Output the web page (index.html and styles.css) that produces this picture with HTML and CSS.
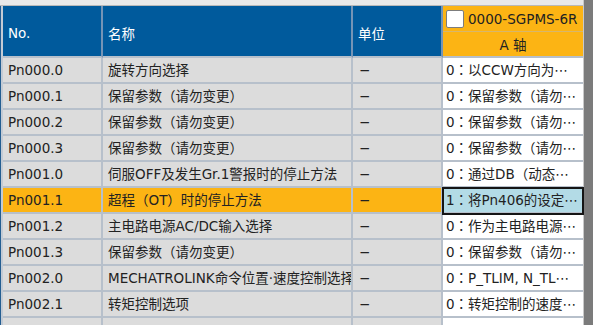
FILE: index.html
```html
<!DOCTYPE html>
<html lang="zh-CN">
<head>
<meta charset="utf-8">
<title>参数一览</title>
<link rel="stylesheet" href="styles.css">
</head>
<body>
<div class="top-strip"></div>
<div class="main">
  <div class="grid">
    <div class="hcell span2">No.</div>
    <div class="hcell span2">名称</div>
    <div class="hcell span2">单位</div>
    <div class="hax-top"><span class="chk"></span><span class="dev">0000-SGPMS-6R</span></div>
    <div class="hax-bot">A 轴</div>

    <div class="c">Pn000.0</div><div class="c">旋转方向选择</div><div class="c u">−</div><div class="c v">0<span lang="ja">：</span>以CCW方向为⋯</div>
    <div class="c">Pn000.1</div><div class="c">保留参数（请勿变更）</div><div class="c u">−</div><div class="c v">0<span lang="ja">：</span>保留参数（请勿⋯</div>
    <div class="c">Pn000.2</div><div class="c">保留参数（请勿变更）</div><div class="c u">−</div><div class="c v">0<span lang="ja">：</span>保留参数（请勿⋯</div>
    <div class="c">Pn000.3</div><div class="c">保留参数（请勿变更）</div><div class="c u">−</div><div class="c v">0<span lang="ja">：</span>保留参数（请勿⋯</div>
    <div class="c">Pn001.0</div><div class="c">伺服OFF及发生Gr.1警报时的停止方法</div><div class="c u">−</div><div class="c v">0<span lang="ja">：</span>通过DB（动态⋯</div>
    <div class="c hl">Pn001.1</div><div class="c hl">超程（OT）时的停止方法</div><div class="c u hl">−</div><div class="c v sel">1<span lang="ja">：</span>将Pn406的设定⋯</div>
    <div class="c">Pn001.2</div><div class="c">主电路电源AC/DC输入选择</div><div class="c u">−</div><div class="c v">0<span lang="ja">：</span>作为主电路电源⋯</div>
    <div class="c">Pn001.3</div><div class="c">保留参数（请勿变更）</div><div class="c u">−</div><div class="c v">0<span lang="ja">：</span>保留参数（请勿⋯</div>
    <div class="c">Pn002.0</div><div class="c">MECHATROLINK命令位置·速度控制选择</div><div class="c u">−</div><div class="c v">0<span lang="ja">：</span>P_TLIM, N_TL⋯</div>
    <div class="c">Pn002.1</div><div class="c">转矩控制选项</div><div class="c u">−</div><div class="c v">0<span lang="ja">：</span>转矩控制的速度⋯</div>
    <div class="c"></div><div class="c"></div><div class="c"></div><div class="c v"></div>
  </div>
  <div class="scrollbar"></div>
</div>
</body>
</html>
```
FILE: styles.css
```css
html, body {
  margin: 0;
  padding: 0;
  width: 593px;
  height: 325px;
  overflow: hidden;
  background: #e8e8e8;
  font-family: "DejaVu Sans", "Noto Sans CJK JP", sans-serif;
  font-size: 13.5px;
  color: #222;
}

.top-strip {
  height: 5px;
  background: #e9e9e9;
  border-bottom: 1px solid #b9b9b9;
  margin-right: 10px;
}

.main {
  display: flex;
}

.grid {
  width: 580px;
  border-left: 1px solid #245e91;
  padding-left: 2px;
  background: #c3cbd5;
  display: grid;
  grid-template-columns: 100px 250px 90px 140px;
  grid-auto-rows: 26px;
}

.hcell {
  grid-row: span 2;
  background: #005a9c;
  color: #fff;
  border-right: 2px solid #7594b6;
  border-bottom: 2px solid #b7c0cb;
  padding-left: 5px;
  display: flex;
  align-items: center;
  padding-top: 4px;
  box-sizing: border-box;
}

.hax-top {
  background: #fcb414;
  border-bottom: 1px solid #d7b66c;
  display: flex;
  align-items: center;
  padding-left: 3px;
  overflow: hidden;
  white-space: nowrap;
  box-sizing: border-box;
}

.chk {
  flex: none;
  width: 16px;
  height: 16px;
  background: #fff;
  border: 1px solid #7d7d7d;
  border-radius: 2px;
  margin-right: 4px;
}

.hax-bot {
  background: #fcb414;
  border-bottom: 2px solid #b7c0cb;
  display: flex;
  align-items: center;
  justify-content: center;
  box-sizing: border-box;
}

.c {
  background: #dcdcdc;
  border-right: 2px solid #b7c0cb;
  border-bottom: 2px solid #b7c0cb;
  box-sizing: border-box;
  line-height: 24px;
  padding: 0 5px;
  white-space: nowrap;
  overflow: hidden;
}

.c.u {
  padding-left: 6px;
}

.c.v {
  background: #fff;
  border-right: 0;
  padding-left: 3px;
}

.c.hl {
  background: #fcb414;
}

.c.sel {
  background: #b3dbe6;
  outline: 2px solid #151515;
  outline-offset: -1px;
  position: relative;
  z-index: 1;
}

.scrollbar {
  width: 10px;
  height: 325px;
  margin-top: -6px;
  background: #7b7b7b;
  border-left: 1px solid #c9c9c9;
  box-sizing: border-box;
}
```
